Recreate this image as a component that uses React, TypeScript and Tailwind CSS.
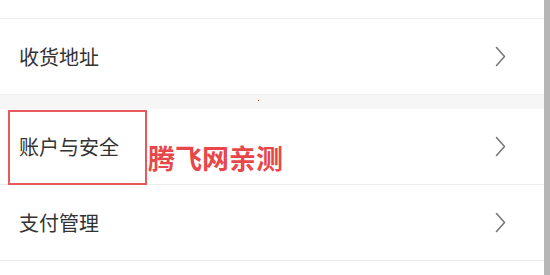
const font = { fontFamily: '"Noto Sans CJK SC", "Noto Sans", sans-serif' };

function Chevron() {
  return (
    <svg width="11" height="21" viewBox="0 0 11 21" fill="none" className="text-[#777]">
      <polyline points="1.5,1.5 9.5,10.5 1.5,19.5" stroke="currentColor" strokeWidth="1.6" strokeLinecap="round" strokeLinejoin="round" />
    </svg>
  );
}

function Row({ label, children }: { label: string; children?: React.ReactNode }) {
  return (
    <div className="relative flex h-[76px] items-center justify-between border-b border-[#ededed] bg-white pl-[19px] pr-[38px]">
      <span className="text-[20px] leading-none text-[#333]">{label}</span>
      <Chevron />
      {children}
    </div>
  );
}

export default function App() {
  return (
    <div className="flex h-[275px] w-[550px] overflow-hidden bg-white" style={font}>
      <div className="flex flex-1 flex-col">
        <div className="h-[19px] border-b border-[#ededed] bg-white" />
        <Row label="收货地址" />
        <div className="relative h-[14px] bg-[#f6f6f6]">
          <span className="absolute left-[258px] top-[5px] h-px w-px bg-[#c0392b]" />
        </div>
        <Row label="账户与安全">
          {/* annotation overlay */}
          <div className="absolute left-[8px] top-[1px] h-[75px] w-[139px] border-2 border-[#e8595b]" />
          <span className="absolute left-[148px] top-[35px] text-[27px] font-bold leading-none text-[#e8474a]">
            腾飞网亲测
          </span>
        </Row>
        <Row label="支付管理" />
      </div>
      <div className="w-[6px] bg-[#b6b6b6]" />
    </div>
  );
}
